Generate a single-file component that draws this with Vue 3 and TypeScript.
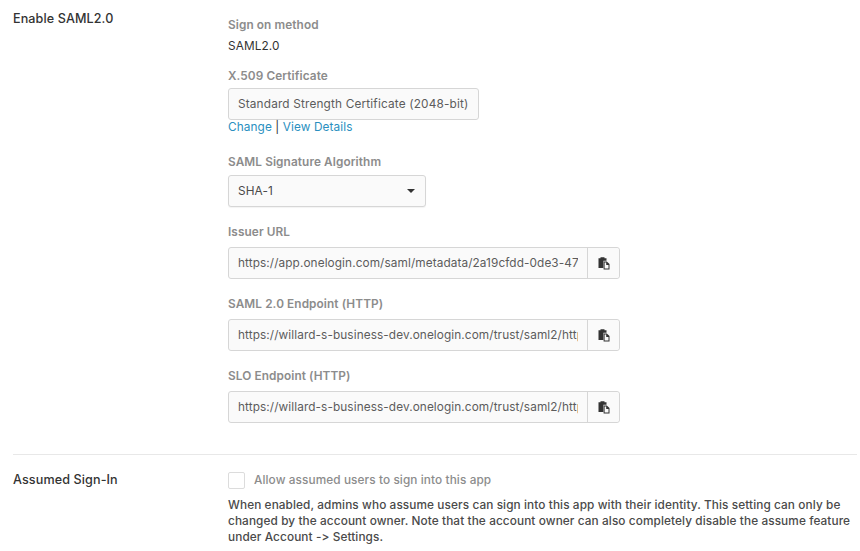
<script setup lang="ts">
const endpoints: { label: string; value: string }[] = [
  { label: 'Issuer URL', value: 'https://app.onelogin.com/saml/metadata/2a19cfdd-0de3-47a1-9b3c-5e8f7a6d1c20' },
  { label: 'SAML 2.0 Endpoint (HTTP)', value: 'https://willard-s-business-dev.onelogin.com/trust/saml2/http-post/sso/2a19cfdd' },
  { label: 'SLO Endpoint (HTTP)', value: 'https://willard-s-business-dev.onelogin.com/trust/saml2/http-redirect/slo/748213' }
]
</script>

<template>
  <div class="page">
    <section class="row first">
      <h3 class="row-title">Enable SAML2.0</h3>
      <div class="fields">
        <div class="label method-label">Sign on method</div>
        <div class="plain">SAML2.0</div>
        <div class="label cert-label">X.509 Certificate</div>
        <div class="cert">Standard Strength Certificate (2048-bit)</div>
        <div class="links"><a href="#">Change</a> | <a href="#">View Details</a></div>
        <div class="label algo-label">SAML Signature Algorithm</div>
        <div class="select">
          <span>SHA-1</span>
          <i class="caret"></i>
        </div>
        <div v-for="item in endpoints" :key="item.label" class="endpoint">
          <div class="label">{{ item.label }}</div>
          <div class="group">
            <input class="url" readonly :value="item.value" />
            <button class="copy" type="button" aria-label="Copy">
              <svg width="12" height="13" viewBox="0 0 12 13">
                <path d="M0.5 1.2h2V.2h4v1h2v2.6H5.4v7.2H.5z" fill="#333" />
                <path d="M5.6 4.4h3.2l2.7 2.7v5.4H5.6z" fill="#333" />
                <path d="M6.6 5.4h1.6v2.6h2.3v3.5H6.6z" fill="#fafafa" />
              </svg>
            </button>
          </div>
        </div>
      </div>
    </section>
    <section class="row second">
      <h3 class="row-title">Assumed Sign-In</h3>
      <div class="fields">
        <label class="check">
          <span class="box"></span>
          <span>Allow assumed users to sign into this app</span>
        </label>
        <p class="note">When enabled, admins who assume users can sign into this app with their identity. This setting can only be changed by the account owner. Note that the account owner can also completely disable the assume feature under Account -&gt; Settings.</p>
      </div>
    </section>
  </div>
</template>

<style>
html, body { margin: 0; background: #fff; overflow: hidden; }
</style>

<style scoped>
.page {
  width: 860px;
  height: 551px;
  overflow: hidden;
  box-sizing: border-box;
  padding: 0 3px 0 13px;
  font-family: Inter, "Liberation Sans", sans-serif;
  font-size: 11.8px;
  letter-spacing: 0.1px;
  color: #3a3a3a;
}
.row {
  display: grid;
  grid-template-columns: 215px 1fr;
}
.first {
  padding: 10px 0 31px;
  border-bottom: 1px solid #e8e8e8;
}
.second { padding-top: 17px; }
.row-title {
  margin: 0;
  font-size: 12.6px;
  font-weight: 500;
  line-height: 18px;
  color: #333;
}
.second .row-title { margin-top: -1px; }
.fields { display: flex; flex-direction: column; align-items: flex-start; }
.label {
  font-weight: 600;
  color: #8c8c8c;
  line-height: 16px;
  height: 16px;
}
.method-label { margin-top: 7px; }
.plain { margin-top: 5px; line-height: 16px; color: #333; }
.cert-label { margin-top: 14px; }
.cert {
  margin-top: 4px;
  box-sizing: border-box;
  width: 251px;
  height: 32px;
  line-height: 30px;
  padding-left: 9px;
  white-space: nowrap;
  letter-spacing: 0.17px;
  background: #fafafa;
  border: 1px solid #d6d6d6;
  border-radius: 3px;
  color: #5c5c5c;
}
.links { line-height: 15px; color: #333; }
.links a { color: #2a8fc0; text-decoration: none; }
.algo-label { margin-top: 19px; }
.select {
  margin-top: 5px;
  box-sizing: border-box;
  width: 198px;
  height: 32px;
  padding: 0 10px 0 9px;
  display: flex;
  align-items: center;
  justify-content: space-between;
  background: #fafafa;
  border: 1px solid #d6d6d6;
  border-radius: 3px;
  box-shadow: 0 1px 1px rgba(0, 0, 0, 0.05);
  color: #4a4a4a;
}
.caret {
  width: 0;
  height: 0;
  border-left: 4px solid transparent;
  border-right: 4px solid transparent;
  border-top: 4px solid #333;
}
.endpoint { margin-top: 17px; }
.group {
  margin-top: 7px;
  display: flex;
  width: 392px;
  height: 32px;
  box-sizing: border-box;
  border: 1px solid #d6d6d6;
  border-radius: 3px;
  background: #fafafa;
}
.url {
  flex: 1;
  min-width: 0;
  border: 0;
  outline: 0;
  background: transparent;
  padding: 0 9px;
  font: inherit;
  letter-spacing: inherit;
  color: #5c5c5c;
}
.copy {
  width: 32px;
  padding: 0;
  border: 0;
  border-left: 1px solid #d6d6d6;
  background: #fafafa;
  border-radius: 0 3px 3px 0;
  display: flex;
  align-items: center;
  justify-content: center;
}
.check {
  display: flex;
  align-items: center;
  gap: 9px;
  color: #8c8c8c;
  font-weight: 500;
  line-height: 17px;
}
.box {
  width: 15px;
  height: 15px;
  border: 1px solid #dcdcdc;
  border-radius: 2px;
  background: #fff;
}
.note {
  margin: 8px 0 0;
  line-height: 16px;
  color: #4a4a4a;
  width: 625px;
  font-weight: 500;
}
</style>
